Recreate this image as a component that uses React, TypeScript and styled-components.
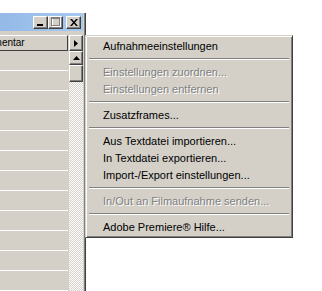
import React from 'react';
import styled, { createGlobalStyle } from 'styled-components';

const GlobalStyle = createGlobalStyle`
  html, body {
    margin: 0;
    padding: 0;
    background: #ffffff;
  }
  body {
    font-family: 'Liberation Sans', Arial, sans-serif;
    font-size: 11px;
    color: #000000;
  }
`;

type MenuEntry = { label: string; disabled?: boolean } | 'sep';

const menuEntries: MenuEntry[] = [
  { label: 'Aufnahmeeinstellungen' },
  'sep',
  { label: 'Einstellungen zuordnen...', disabled: true },
  { label: 'Einstellungen entfernen', disabled: true },
  'sep',
  { label: 'Zusatzframes...' },
  'sep',
  { label: 'Aus Textdatei importieren...' },
  { label: 'In Textdatei exportieren...' },
  { label: 'Import-/Export einstellungen...' },
  'sep',
  { label: 'In/Out an Filmaufnahme senden...', disabled: true },
  'sep',
  { label: 'Adobe Premiere® Hilfe...' },
];

export default function App() {
  const rows = Array.from({ length: 12 });
  return (
    <Page>
      <GlobalStyle />
      <Window>
        <TitleBar>
          <TitleButtons>
            <CaptionBtn>
              <svg width="8" height="8" viewBox="0 0 8 8">
                <rect x="0" y="6" width="6" height="2" fill="#000" />
              </svg>
            </CaptionBtn>
            <CaptionBtn>
              <svg width="10" height="10" viewBox="0 0 10 10">
                <rect x="1.5" y="1.5" width="8" height="8" fill="none" stroke="#fff" />
                <rect x="0.5" y="0.5" width="8" height="8" fill="none" stroke="#808080" />
                <rect x="0.5" y="1" width="8" height="1" fill="#808080" />
              </svg>
            </CaptionBtn>
            <CaptionBtn $gap>
              <svg width="8" height="7" viewBox="0 0 8 7">
                <path d="M0 0h2l2 2.5L6 0h2L5 3.5 8 7H6L4 4.5 2 7H0l3-3.5z" fill="#000" />
              </svg>
            </CaptionBtn>
          </TitleButtons>
        </TitleBar>
        <Body>
          <ListColumn>
            <HeaderCell>Kommentar</HeaderCell>
            {rows.map((_, idx) => (
              <ListRow key={idx} />
            ))}
          </ListColumn>
          <ScrollColumn>
            <RaisedBtn $h={16}>
              <svg width="4" height="7" viewBox="0 0 4 7">
                <path d="M0 0l4 3.5L0 7z" fill="#000" />
              </svg>
            </RaisedBtn>
            <RaisedBtn $h={14}>
              <svg width="7" height="4" viewBox="0 0 7 4">
                <path d="M3.5 0L7 4H0z" fill="#000" />
              </svg>
            </RaisedBtn>
            <RaisedBtn $h={17} />
            <Track />
          </ScrollColumn>
        </Body>
      </Window>
      <Menu>
        {menuEntries.map((entry, idx) =>
          entry === 'sep' ? (
            <Separator key={idx} />
          ) : (
            <MenuItem key={idx} $disabled={entry.disabled}>
              {entry.label}
            </MenuItem>
          ),
        )}
      </Menu>
    </Page>
  );
}

const Page = styled.div`
  position: relative;
  width: 322px;
  height: 291px;
  overflow: hidden;
  background: #ffffff;
  padding-top: 13px;
  box-sizing: border-box;
`;

const Window = styled.div`
  width: 86px;
  height: 300px;
  background: #d4d0c8;
  border-right: 1px solid #404040;
  box-shadow: inset -1px 0 #808080;
  padding-right: 2px;
  box-sizing: border-box;
  display: flex;
  flex-direction: column;
`;

const TitleBar = styled.div`
  height: 18px;
  background: linear-gradient(to right, #95b9e8, #a6caf0);
  display: flex;
  align-items: center;
  justify-content: flex-end;
  padding-right: 2px;
`;

const TitleButtons = styled.div`
  display: flex;
  align-items: center;
`;

const CaptionBtn = styled.div<{ $gap?: boolean }>`
  width: 15px;
  height: 13px;
  margin-left: ${(p) => (p.$gap ? '3px' : '0')};
  background: #d4d0c8;
  border-top: 1px solid #ffffff;
  border-left: 1px solid #ffffff;
  border-right: 1px solid #404040;
  border-bottom: 1px solid #404040;
  box-shadow: inset -1px -1px #808080;
  box-sizing: border-box;
  display: flex;
  align-items: center;
  justify-content: center;
`;

const Body = styled.div`
  flex: 1;
  margin-top: 4px;
  display: grid;
  grid-template-columns: 68px 14px;
  column-gap: 1px;
  min-height: 0;
`;

const ListColumn = styled.div`
  display: flex;
  flex-direction: column;
  overflow: hidden;
`;

const HeaderCell = styled.div`
  height: 16px;
  flex-shrink: 0;
  border-top: 1px solid #ffffff;
  border-bottom: 1px solid #404040;
  border-right: 1px solid #404040;
  box-sizing: border-box;
  font-size: 10px;
  line-height: 14px;
  text-indent: -27px;
  white-space: nowrap;
  overflow: hidden;
`;

const ListRow = styled.div`
  height: 20px;
  flex-shrink: 0;
  border-bottom: 1px solid #ffffff;
  box-sizing: border-box;
`;

const ScrollColumn = styled.div`
  display: flex;
  flex-direction: column;
`;

const RaisedBtn = styled.div<{ $h: number }>`
  height: ${(p) => p.$h}px;
  flex-shrink: 0;
  background: #d4d0c8;
  border-top: 1px solid #ffffff;
  border-left: 1px solid #ffffff;
  border-right: 1px solid #404040;
  border-bottom: 1px solid #404040;
  box-shadow: inset -1px -1px #808080;
  box-sizing: border-box;
  display: flex;
  align-items: center;
  justify-content: center;
`;

const Track = styled.div`
  flex: 1;
  background: repeating-conic-gradient(#ffffff 0% 25%, #d4d0c8 0% 50%) 0 0 / 2px 2px;
`;

const Menu = styled.div`
  position: absolute;
  left: 85px;
  top: 35px;
  width: 208px;
  background: #d4d0c8;
  border-top: 1px solid #d4d0c8;
  border-left: 1px solid #d4d0c8;
  border-right: 1px solid #404040;
  border-bottom: 1px solid #404040;
  box-shadow: inset 1px 1px #ffffff, inset -1px -1px #808080;
  padding: 2px 2px 1px 2px;
  box-sizing: border-box;
  display: flex;
  flex-direction: column;
`;

const MenuItem = styled.div<{ $disabled?: boolean }>`
  height: 17px;
  line-height: 17px;
  padding-left: 15px;
  white-space: nowrap;
  color: ${(p) => (p.$disabled ? '#808080' : '#000000')};
  text-shadow: ${(p) => (p.$disabled ? '1px 1px 0 #ffffff' : 'none')};
`;

const Separator = styled.div`
  height: 1px;
  margin: 3px 1px 4px;
  background: #808080;
  border-bottom: 1px solid #ffffff;
`;
